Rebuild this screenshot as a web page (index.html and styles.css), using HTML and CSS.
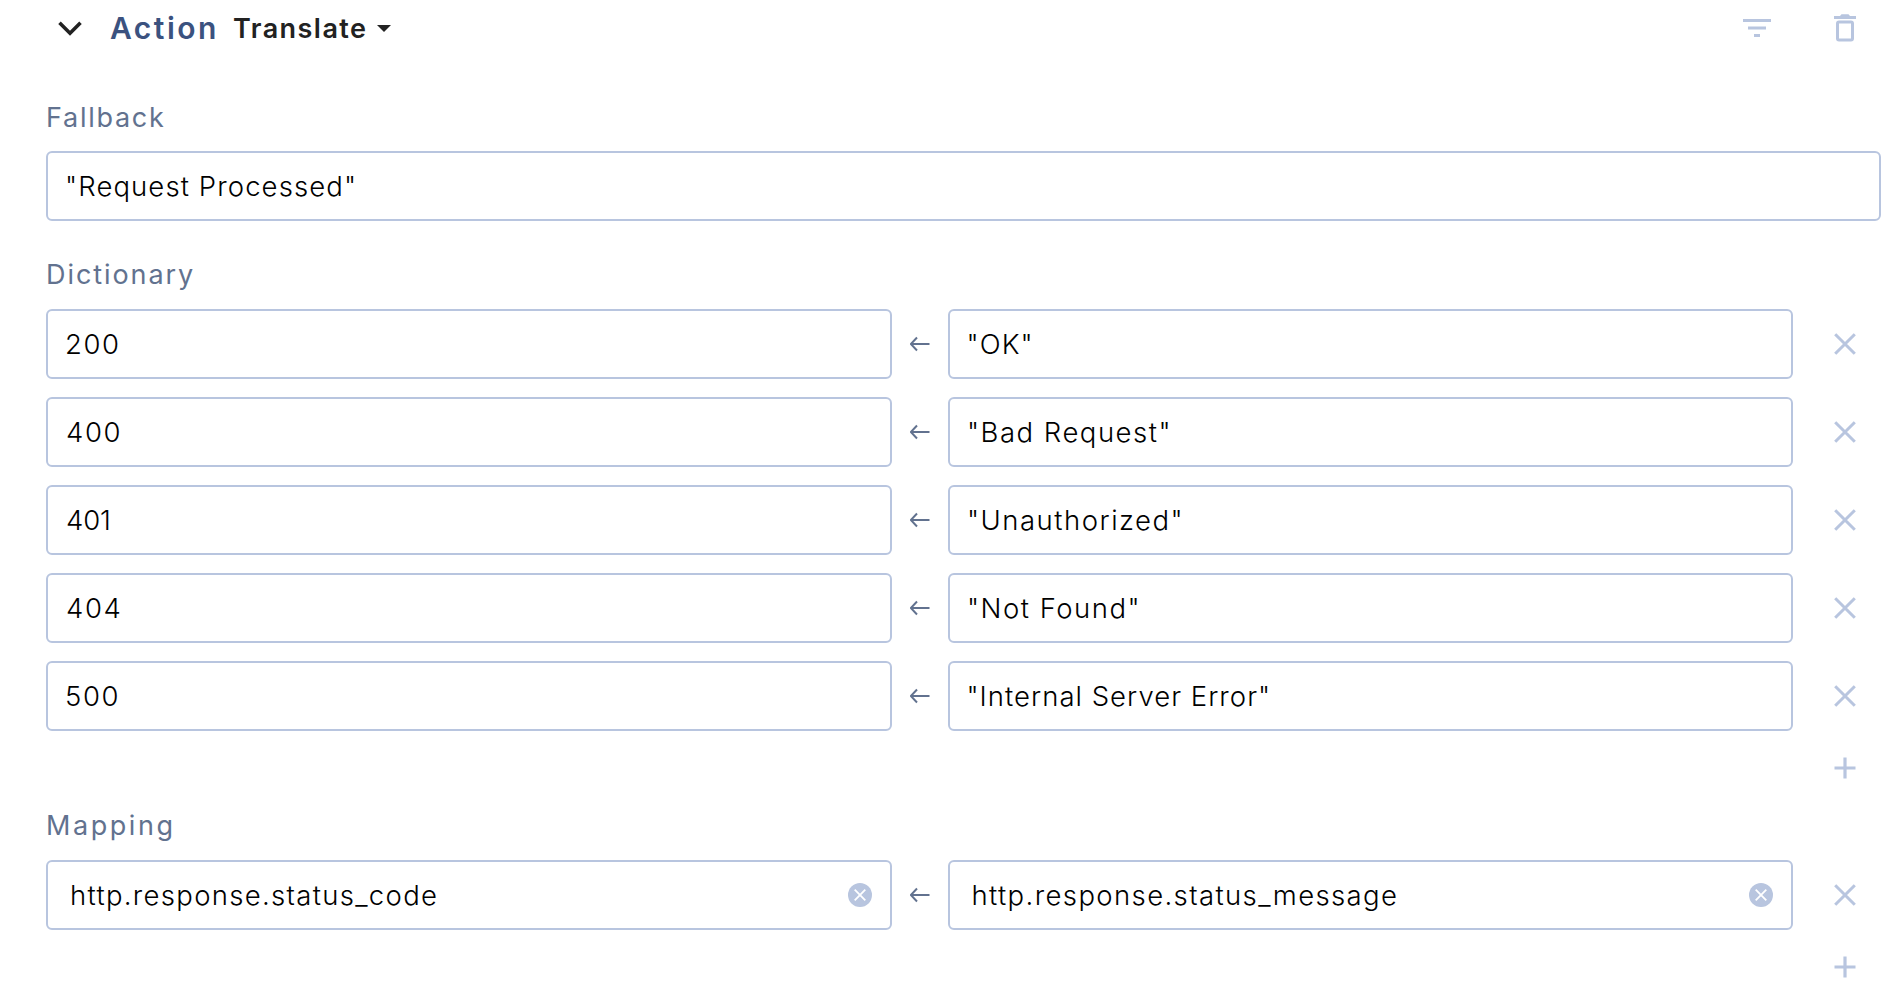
FILE: index.html
```
<!DOCTYPE html>
<html lang="en">
<head>
<meta charset="utf-8">
<title>Action: Translate</title>
<link rel="stylesheet" href="styles.css">
</head>
<body>
<svg class="sprite" aria-hidden="true">
  <symbol id="arrow" viewBox="0 0 20 16"><path d="M19.500 8H1M7 1.500L.8 8l6.200 6.500" fill="none" stroke="currentColor" stroke-width="2"/></symbol>
  <symbol id="cross" viewBox="0 0 22 22"><path d="M1.200 1.200l19.600 19.600M20.800 1.200L1.200 20.800" fill="none" stroke="currentColor" stroke-width="3"/></symbol>
  <symbol id="plus" viewBox="0 0 22 22"><path d="M11 .5v21M.5 11h21" fill="none" stroke="currentColor" stroke-width="3.200"/></symbol>
  <symbol id="clear" viewBox="0 0 24 24"><circle cx="12" cy="12" r="12" fill="currentColor"/><path d="M6.700 6.700l10.600 10.600M17.300 6.700L6.700 17.300" fill="none" stroke="#fff" stroke-width="1.800"/></symbol>
</svg>
<main class="panel">
  <header class="head">
    <svg class="chevron" viewBox="0 0 24 15"><path d="M1.500 1.800L12 12.200 22.500 1.800" fill="none" stroke="currentColor" stroke-width="3.600"/></svg>
    <h1 class="title">Action</h1>
    <button class="kind"><span>Translate</span><svg class="caret" viewBox="0 0 14 7"><path d="M0 0h14L7 7z" fill="currentColor"/></svg></button>
    <div class="tools">
      <svg class="filter" viewBox="0 0 28 18"><path d="M0 0h28v3H0zM5 7.500h18v3H5zM11 15h6v3h-6z" fill="currentColor"/></svg>
      <svg class="trash" viewBox="0 0 22 28"><path d="M0 2h6l1.500-1.800h7L16 2h6v3H0z" fill="currentColor"/><rect x="3.500" y="8" width="15" height="18" rx="1.500" fill="none" stroke="currentColor" stroke-width="3"/></svg>
    </div>
  </header>

  <section class="group">
    <h2 class="label t-fallback">Fallback</h2>
    <div class="field wide t-request">"Request Processed"</div>
  </section>

  <section class="group dictionary">
    <h2 class="label t-dictionary">Dictionary</h2>
    <div class="rows">
      <div class="row"><div class="field num">200</div><svg class="arrow"><use href="#arrow"/></svg><div class="field t-ok">"OK"</div><svg class="act"><use href="#cross"/></svg></div>
      <div class="row"><div class="field num four">400</div><svg class="arrow"><use href="#arrow"/></svg><div class="field t-mid">"Bad Request"</div><svg class="act"><use href="#cross"/></svg></div>
      <div class="row"><div class="field num four tight">401</div><svg class="arrow"><use href="#arrow"/></svg><div class="field t-mid">"Unauthorized"</div><svg class="act"><use href="#cross"/></svg></div>
      <div class="row"><div class="field num four">404</div><svg class="arrow"><use href="#arrow"/></svg><div class="field t-mid">"Not Found"</div><svg class="act"><use href="#cross"/></svg></div>
      <div class="row"><div class="field num">500</div><svg class="arrow"><use href="#arrow"/></svg><div class="field t-long">"Internal Server Error"</div><svg class="act"><use href="#cross"/></svg></div>
    </div>
    <div class="add"><svg class="act"><use href="#plus"/></svg></div>
  </section>

  <section class="group mapping">
    <h2 class="label t-mapping">Mapping</h2>
    <div class="row">
      <div class="field path t-code"><span>http.response.status_code</span><svg class="clear"><use href="#clear"/></svg></div>
      <svg class="arrow"><use href="#arrow"/></svg>
      <div class="field path t-message"><span>http.response.status_message</span><svg class="clear"><use href="#clear"/></svg></div>
      <svg class="act"><use href="#cross"/></svg>
    </div>
    <div class="add"><svg class="act"><use href="#plus"/></svg></div>
  </section>
</main>
</body>
</html>
```
FILE: styles.css
```
* { box-sizing: border-box; }
body {
  margin: 0;
  background: #fff;
  color: #000;
  font: 400 27px/36px Inter, Montserrat, sans-serif;
  overflow: hidden;
}
svg { display: block; flex: none; }
.sprite { display: none; }
.panel { padding: 0 19px 0 46px; }

.head { display: flex; align-items: center; height: 57px; padding: 0 25px 0 12px; color: #222; }
.chevron { width: 24px; height: 15px; }
.title { margin: 0 0 0 28px; padding-bottom: 2px; width: 123px; font-size: 30px; font-weight: 600; letter-spacing: 2.5px; color: #3b527f; }
.kind {
  display: flex; align-items: center; gap: 10px;
  margin: 0; padding: 0; border: 0; background: none; color: inherit;
  font: inherit; font-weight: 600; letter-spacing: 1.45px;
}
.caret { width: 14px; height: 7px; }
.tools { display: flex; align-items: center; gap: 63px; margin-left: auto; padding-bottom: 1px; color: #b8c5df; }
.filter { width: 28px; height: 18px; }
.trash { width: 22px; height: 28px; }

.group { padding-top: 43px; }
.label { margin: 0 0 15px; font-size: 27px; font-weight: 400; color: #62728f; }
.dictionary { padding-top: 36px; }
.mapping { padding-top: 29px; }
.dictionary .label, .mapping .label { margin-bottom: 16px; }
.rows { display: flex; flex-direction: column; gap: 18px; }
.row { display: flex; align-items: center; padding-right: 25px; }
.field {
  display: flex; align-items: center;
  flex: 1 1 0; min-width: 0; height: 70px;
  padding: 0 18px 0 17px;
  border: 2px solid #b8c5df; border-radius: 6px;
  font-size: 27.5px;
  font-weight: 350;
}
.wide { width: 100%; }
.path { justify-content: space-between; padding: 0 18px 0 22px; }
.arrow { width: 20px; height: 16px; margin: 0 18px; color: #62728f; }
.act { width: 22px; height: 22px; margin-left: 41px; color: #b8c5df; }
.clear { width: 24px; height: 24px; color: #b8c5df; }
.add { display: flex; justify-content: flex-end; padding: 26px 25px 0 0; }

.num { letter-spacing: 1.6px; }
.four { padding-left: 18px; }
.tight { letter-spacing: -.1px; }
.t-fallback { letter-spacing: 1.73px; }
.t-dictionary { letter-spacing: 1.93px; }
.t-mapping { letter-spacing: 2.55px; }
.t-request { letter-spacing: 1.1px; }
.t-ok { letter-spacing: 1.1px; }
.t-mid { letter-spacing: 1.5px; }
.t-long { letter-spacing: 1.02px; }
.t-code { letter-spacing: 1.31px; }
.t-message { letter-spacing: 1.38px; }
```
